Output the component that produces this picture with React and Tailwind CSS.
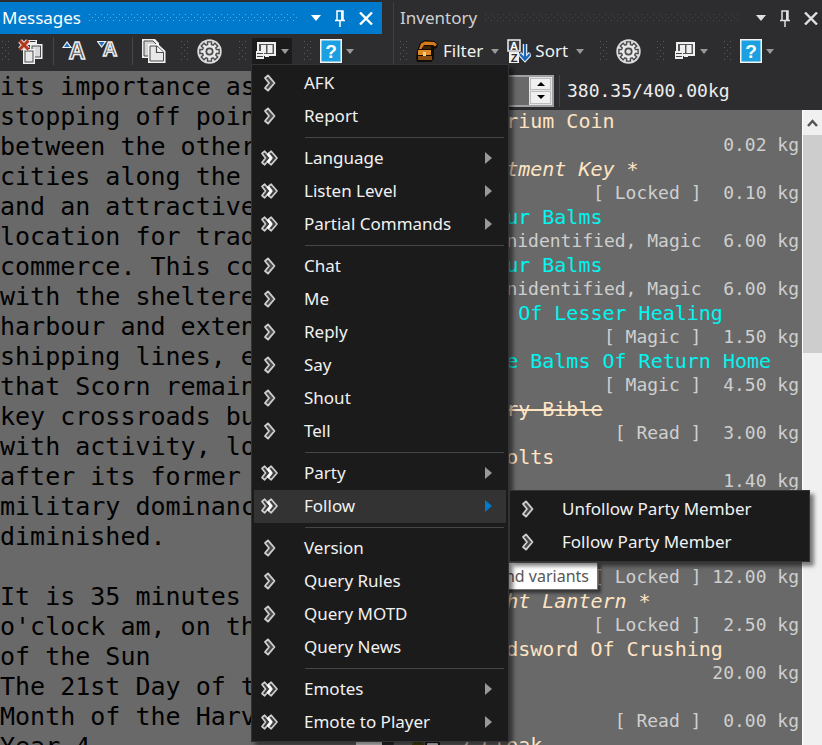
import React from "react";

const MONO = "font-['DejaVu_Sans_Mono','Liberation_Mono',monospace]";

/* ---------- textures ---------- */

function Dots({ id, color, className }) {
  return (
    <svg className={className} aria-hidden="true" shapeRendering="crispEdges">
      <defs>
        <pattern id={id} width="6" height="6" patternUnits="userSpaceOnUse">
          <rect x="0" y="0" width="1" height="1" fill={color} />
          <rect x="3" y="3" width="1" height="1" fill={color} />
        </pattern>
      </defs>
      <rect width="100%" height="100%" fill={`url(#${id})`} />
    </svg>
  );
}

function Grip({ id }) {
  return <Dots id={id} color="#5a5a5f" className="h-5 w-2 shrink-0" />;
}

/* ---------- icons ---------- */

function Caret({ className }) {
  return (
    <svg className={className} width="8" height="5" viewBox="0 0 8 5" aria-hidden="true">
      <path d="M0 0h8L4 5z" fill="#999" />
    </svg>
  );
}

function ClearIcon() {
  return (
    <svg width="25" height="25" viewBox="0 0 25 25" aria-hidden="true">
      <path d="M10 1h9v5h-9z" fill="#ededed" />
      <path d="M12 2.500h5.500" stroke="#3a3a3d" strokeWidth="1" />
      <rect x="12" y="5" width="12.500" height="15" fill="#f2f2f2" />
      <rect x="14" y="7" width="8.500" height="11" fill="#d8d8d8" stroke="#4a4a4d" strokeWidth="1" />
      <rect x="5" y="10" width="12" height="15" fill="#f2f2f2" />
      <rect x="7" y="12" width="8" height="11" fill="#e8e8e8" stroke="#4a4a4d" strokeWidth="1" />
      <path d="M2 2l8 8M10 2l-8 8" stroke="#e8e8e8" strokeWidth="5" />
      <path d="M1.500 1.500l9 9M10.500 1.500l-9 9" stroke="#b3351c" strokeWidth="3" />
    </svg>
  );
}

function FontIcon({ up }) {
  return (
    <svg width="25" height="24" viewBox="0 0 25 24" aria-hidden="true">
      <text
        x={up ? 15 : 13}
        y={up ? 20 : 17}
        textAnchor="middle"
        fontFamily="Liberation Sans, sans-serif"
        fontSize={up ? 23 : 20}
        fontWeight="bold"
        fill="#4a4a4d"
        stroke="#ececec"
        strokeWidth="1.500"
      >
        A
      </text>
      {up ? (
        <path d="M1 8.500L5 3l4 5.500z" fill="#1f6fc0" stroke="#f0f0f0" strokeWidth="1.200" />
      ) : (
        <path d="M0.600 2.500h8L4.600 8z" fill="#1f6fc0" stroke="#f0f0f0" strokeWidth="1.200" />
      )}
    </svg>
  );
}

function CopyIcon() {
  return (
    <svg width="24" height="24" viewBox="0 0 24 24" aria-hidden="true">
      <path d="M0 0h13l4 4v15H0z" fill="#f0f0f0" />
      <path d="M2 2h9l4 4v11H2z" fill="#d4d4d4" stroke="#4a4a4d" strokeWidth="1" />
      <path d="M6 5h10l7.500 7v12H6z" fill="#f4f4f4" />
      <path d="M8 7h7l6.500 6v9H8z" fill="#e8e8e8" stroke="#4a4a4d" strokeWidth="1" />
      <path d="M14.500 7v6.500h7" fill="#f4f4f4" stroke="#4a4a4d" strokeWidth="1.200" />
    </svg>
  );
}

function GearIcon() {
  const pts = [];
  for (let i = 0; i < 8; i++) {
    const base = (i * Math.PI) / 4;
    [[-0.27, 7.2], [-0.2, 9.8], [0.2, 9.8], [0.27, 7.2]].forEach(([a, r]) => {
      pts.push(`${(12.5 + r * Math.sin(base + a)).toFixed(2)},${(12.5 - r * Math.cos(base + a)).toFixed(2)}`);
    });
  }
  return (
    <svg width="25" height="25" viewBox="0 0 25 25" aria-hidden="true">
      <circle cx="12.500" cy="12.500" r="12.200" fill="#dcdcdc" />
      <polygon points={pts.join(" ")} fill="#e8e8e8" stroke="#4a4a4d" strokeWidth="1.400" />
      <circle cx="12.500" cy="12.500" r="3.200" fill="#e0e0e0" stroke="#4a4a4d" strokeWidth="1.700" />
    </svg>
  );
}

function MacroIcon() {
  return (
    <svg width="20" height="18" viewBox="0 0 20 18" aria-hidden="true">
      <rect x="1" y="0" width="19" height="14" fill="#efefef" />
      <path d="M3 2h15v10H3z" fill="#555" />
      <rect x="5" y="3" width="5" height="8" fill="#efefef" />
      <rect x="11.500" y="3" width="5" height="8" fill="#efefef" />
      <rect x="0" y="9" width="8" height="8" fill="#efefef" />
      <path d="M1 11.500h6M1 14.500h6" stroke="#444" strokeWidth="1.200" />
      <path d="M9 14h4" stroke="#efefef" strokeWidth="2" />
    </svg>
  );
}

function HelpIcon() {
  return (
    <svg width="22" height="24" viewBox="0 0 22 24" aria-hidden="true">
      <rect x="0" y="0" width="22" height="24" fill="#f2f2f2" />
      <rect x="1.500" y="1.500" width="19" height="21" fill="#1ba1e2" />
      <text
        x="11"
        y="19"
        textAnchor="middle"
        fontFamily="Liberation Sans, sans-serif"
        fontSize="19"
        fontWeight="bold"
        fill="#fff"
      >
        ?
      </text>
    </svg>
  );
}

function BagIcon() {
  return (
    <svg width="24" height="24" viewBox="0 0 24 24" aria-hidden="true">
      <path d="M2 12L5 4l5-3 9 1 4 3-1 4-3 1v10l-3 3H2l-1-4z" fill="#120c06" />
      <path d="M4 10l2-5.500L10 2.500l9 .5 3 2.200-2 2.300-2-1.500H9L6.500 10z" fill="#d67a1c" />
      <path d="M3 11h13v5H3z" fill="#e08a28" />
      <path d="M3 17h14v4H3z" fill="#8a4d12" />
      <path d="M8 13h3v4H8z" fill="#fbd27a" />
      <path d="M8 7h8v3H8z" fill="#3a2108" />
    </svg>
  );
}

function SortIcon() {
  const letter = {
    fontFamily: "Liberation Sans, sans-serif",
    fontWeight: "bold",
    fontSize: "11",
    textAnchor: "middle",
  };
  return (
    <svg width="24" height="24" viewBox="0 0 24 24" aria-hidden="true">
      <rect x="1" y="1" width="12" height="11" fill="#3a3a3d" stroke="#f0f0f0" strokeWidth="1.500" />
      <text x="7" y="10.500" fill="#fff" {...letter}>A</text>
      <rect x="2" y="13" width="10" height="11" fill="#f0f0f0" />
      <text x="7" y="22.500" fill="#2d2d30" {...letter}>Z</text>
      <path d="M18 5v15M12.500 14.500l5.500 6 5.500-6" fill="none" stroke="#e8f1fa" strokeWidth="4.500" />
      <path d="M18 5v15M13 15l5 5.500 5-5.500" fill="none" stroke="#1766b5" strokeWidth="2.200" />
    </svg>
  );
}

function ChevronIcon({ double }) {
  return (
    <svg width="19" height="18" viewBox="0 0 19 18" aria-hidden="true" strokeLinejoin="round">
      {double ? (
        <>
          <path
            d="M2 4.500l2.700-2.300L10.500 9l-5.800 6.800L2 13.500 5.500 9z"
            fill="#3f3f41"
            stroke="#cfcfcf"
            strokeWidth="1.700"
          />
          <path
            d="M8.500 4.500l2.700-2.300L17 9l-5.800 6.800-2.700-2.300L12 9z"
            fill="#3f3f41"
            stroke="#cfcfcf"
            strokeWidth="1.700"
          />
          <path d="M7.500 4.500L11 9l-3.500 4.500" fill="none" stroke="#fff" strokeWidth="2.200" />
        </>
      ) : (
        <path
          d="M5 4l3-2.600L14.500 9 8 16.600 5 14l4-5z"
          fill="#4a4a4c"
          stroke="#cfcfcf"
          strokeWidth="1.800"
        />
      )}
    </svg>
  );
}

/* ---------- chrome ---------- */

function TitleBar({ id, title, active }) {
  const glyph = active ? "#fff" : "#e0e0e0";
  return (
    <header
      className={
        active
          ? "flex h-8 shrink-0 items-center bg-[#007acc] pl-[2px] pr-[9px] text-white"
          : "flex h-8 shrink-0 items-center bg-[#2d2d30] pl-[6px] pr-1 text-[#d0d0d0]"
      }
    >
      <h2 className="mr-2">{title}</h2>
      <Dots id={id} color={active ? "#63aee0" : "#47474b"} className="h-2 min-w-0 flex-1" />
      <div className={active ? "ml-3 flex items-center gap-[14px]" : "ml-4 flex items-center gap-[14px]"}>
        <button type="button" aria-label="Window options">
          <svg width="10" height="6" viewBox="0 0 10 6"><path d="M0 0h10L5 6z" fill={glyph} /></svg>
        </button>
        <button type="button" aria-label="Auto hide">
          <svg width="10" height="17" viewBox="0 0 10 17">
            <path d="M2 10V1h6v9M0 10.500h10M5 11v6" fill="none" stroke={glyph} strokeWidth="1.500" />
            <path d="M7 1v9" stroke={glyph} strokeWidth="2" />
          </svg>
        </button>
        <button type="button" aria-label="Close">
          <svg width="14" height="13" viewBox="0 0 14 13">
            <path d="M1 0.500l12 12M13 0.500l-12 12" stroke={glyph} strokeWidth="2.400" />
          </svg>
        </button>
      </div>
    </header>
  );
}

function HelpButton() {
  return (
    <button type="button" aria-label="Help" className="flex items-center gap-1">
      <HelpIcon />
      <Caret />
    </button>
  );
}

/* ---------- menu ---------- */

const SUB = [{ label: "Unfollow Party Member" }, { label: "Follow Party Member" }];

const MENU = [
  [{ label: "AFK" }, { label: "Report" }],
  [
    { label: "Language", more: true },
    { label: "Listen Level", more: true },
    { label: "Partial Commands", more: true },
  ],
  [
    { label: "Chat" },
    { label: "Me" },
    { label: "Reply" },
    { label: "Say" },
    { label: "Shout" },
    { label: "Tell" },
  ],
  [{ label: "Party", more: true }, { label: "Follow", more: true, open: SUB }],
  [{ label: "Version" }, { label: "Query Rules" }, { label: "Query MOTD" }, { label: "Query News" }],
  [{ label: "Emotes", more: true }, { label: "Emote to Player", more: true }],
];

function MenuItem({ item }) {
  return (
    <li className="relative">
      <button
        type="button"
        className={
          item.open
            ? "flex h-[33px] w-full items-center bg-[#333334] pb-px pl-[6px] pr-[14px] text-left"
            : "flex h-[33px] w-full items-center pb-px pl-[6px] pr-[14px] text-left"
        }
      >
        <ChevronIcon double={item.more} />
        <span className="ml-[25px] flex-1 whitespace-nowrap">{item.label}</span>
        {item.more && (
          <svg width="7" height="12" viewBox="0 0 7 12" aria-hidden="true">
            <path d="M0 0l7 6-7 6z" fill={item.open ? "#007acc" : "#999"} />
          </svg>
        )}
      </button>
      {item.open && (
        <ul className="absolute left-full top-0 ml-[3px] w-[301px] border border-[#333337] bg-[#1b1b1c] p-[2px] shadow-[4px_4px_4px_rgba(0,0,0,0.5)]">
          {item.open.map((s) => (
            <MenuItem key={s.label} item={s} />
          ))}
        </ul>
      )}
    </li>
  );
}

function CommandMenu() {
  return (
    <div className="absolute -left-px top-full z-20 w-[258px] border border-[#333337] bg-[#1b1b1c] p-[2px] text-[#f1f1f1] shadow-[4px_4px_4px_rgba(0,0,0,0.5)]">
      {MENU.map((group, i) => (
        <React.Fragment key={i}>
          {i > 0 && <hr className="my-1 ml-[51px] mr-[2px] border-0 border-t border-[#46464a]" />}
          <ul>
            {group.map((item) => (
              <MenuItem key={item.label} item={item} />
            ))}
          </ul>
        </React.Fragment>
      ))}
    </div>
  );
}

/* ---------- messages panel ---------- */

const LINES = [
  "its importance as a",
  "stopping off point",
  "between the other",
  "cities along the coast",
  "and an attractive",
  "location for trade and",
  "commerce. This combined",
  "with the sheltered",
  "harbour and extensive",
  "shipping lines, ensure",
  "that Scorn remains a",
  "key crossroads bustling",
  "with activity, long",
  "after its former",
  "military dominance has",
  "diminished.",
  " ",
  "It is 35 minutes past 7",
  "o'clock am, on the Day",
  "of the Sun",
  "The 21st Day of the",
  "Month of the Harvest,",
  "Year 4",
];

function Messages() {
  return (
    <section className="flex min-w-0 flex-[382] flex-col">
      <TitleBar id="dots-messages" title="Messages" active />
      <div className="flex h-[37px] shrink-0 items-center pb-[3px] pl-[2px]">
        <Grip id="grip-a" />
        <button type="button" aria-label="Clear" className="ml-2"><ClearIcon /></button>
        <span className="ml-[10px] h-7 w-px shrink-0 bg-[#46464a]" />
        <button type="button" aria-label="Increase font size" className="ml-2"><FontIcon up /></button>
        <button type="button" aria-label="Decrease font size" className="ml-[10px]"><FontIcon /></button>
        <span className="ml-[10px] h-7 w-px shrink-0 bg-[#46464a]" />
        <button type="button" aria-label="Copy" className="ml-[9px] mr-[15px]"><CopyIcon /></button>
        <Grip id="grip-b" />
        <button type="button" aria-label="Settings" className="ml-2 mr-[17px]"><GearIcon /></button>
        <Grip id="grip-c" />
        <div className="relative ml-[5px] mr-3">
          <button
            type="button"
            aria-label="Commands"
            aria-expanded="true"
            className="flex h-[26px] w-[40px] items-center gap-[5px] bg-[#1b1b1c] pl-1"
          >
            <MacroIcon />
            <Caret />
          </button>
          <CommandMenu />
        </div>
        <Grip id="grip-d" />
        <div className="ml-2"><HelpButton /></div>
      </div>
      <div className="flex min-h-0 flex-1 bg-[#696969]">
        <div className={`${MONO} min-w-0 flex-1 overflow-hidden whitespace-pre pt-px text-[25px] leading-[30px] text-black`}>
          {LINES.map((l, i) => (
            <p key={i}>{l}</p>
          ))}
        </div>
        <div className="w-[26px] bg-[#f0f0f0]" />
      </div>
    </section>
  );
}

/* ---------- inventory panel ---------- */

const MAGIC = "text-[#00f5f0]";
const PLAIN = "text-[#ffe4c4]";

const ITEMS = [
  { name: "Imperium Coin", detail: "0.02 kg", style: PLAIN },
  { name: "Apartment Key *", detail: "[ Locked ]  0.10 kg", style: `${PLAIN} italic` },
  { name: "Armour Balms", detail: "Unidentified, Magic  6.00 kg", style: MAGIC },
  { name: "Armour Balms", detail: "Unidentified, Magic  6.00 kg", style: MAGIC },
  { name: "Balm Of Lesser Healing", detail: "[ Magic ]  1.50 kg", style: MAGIC },
  { name: "Three Balms Of Return Home", detail: "[ Magic ]  4.50 kg", style: MAGIC },
  { name: "Dreary Bible", detail: "[ Read ]  3.00 kg", style: `${PLAIN} line-through` },
  { name: "14 Bolts", detail: "1.40 kg", style: PLAIN },
  { name: "Rod", detail: "3.00 kg", style: PLAIN },
  { name: "Key", detail: "[ Locked ] 12.00 kg", style: PLAIN },
  { name: "Bright Lantern *", detail: "[ Locked ]  2.50 kg", style: `${PLAIN} italic` },
  { name: "Broadsword Of Crushing", detail: "20.00 kg", style: PLAIN },
  { name: "Map", detail: "[ Read ]  0.00 kg", style: PLAIN },
  { name: "2 Cloak", detail: "2.00 kg", style: PLAIN },
];

function Inventory() {
  return (
    <section className="flex min-w-0 flex-[428] flex-col border-l border-[#3f3f46]">
      <TitleBar id="dots-inventory" title="Inventory" />
      <div className="flex h-[37px] shrink-0 items-center pb-[3px] pl-[6px] text-[#f1f1f1]">
        <Grip id="grip-e" />
        <button type="button" className="ml-[7px] flex items-center">
          <BagIcon />
          <span className="ml-1">Filter</span>
          <Caret className="ml-2" />
        </button>
        <button type="button" className="ml-2 mr-4 flex items-center">
          <SortIcon />
          <span className="ml-1">Sort</span>
          <Caret className="ml-2" />
        </button>
        <Grip id="grip-f" />
        <button type="button" aria-label="Settings" className="ml-2 mr-4"><GearIcon /></button>
        <Grip id="grip-g" />
        <button type="button" aria-label="Commands" className="ml-[10px] mr-4 flex items-center gap-[5px]">
          <MacroIcon />
          <Caret />
        </button>
        <Grip id="grip-h" />
        <div className="ml-2"><HelpButton /></div>
      </div>
      <div className={`${MONO} flex h-[39px] shrink-0 items-center text-[#ededed]`}>
        <div className="flex h-8 w-[160px] border-2 border-[#a0a0a4] bg-[#696969]">
          <input aria-label="Amount" className="min-w-0 flex-1 bg-transparent outline-none" />
          <div className="flex w-[23px] flex-col gap-px bg-[#e4e4e4] p-px">
            <button type="button" aria-label="Increase" className="flex flex-1 items-center justify-center border border-[#bdbdbd] bg-[#f0f0f0]">
              <svg width="8" height="4" viewBox="0 0 8 4"><path d="M0 4h8L4 0z" fill="#000" /></svg>
            </button>
            <button type="button" aria-label="Decrease" className="flex flex-1 items-center justify-center border border-[#bdbdbd] bg-[#f0f0f0]">
              <svg width="8" height="4" viewBox="0 0 8 4"><path d="M0 0h8L4 4z" fill="#000" /></svg>
            </button>
          </div>
        </div>
        <span className="ml-[5px] h-8 w-px bg-[#46464a]" />
        <span className="ml-[7px] text-[18px]">380.35/400.00kg</span>
      </div>
      <div className="relative flex min-h-0 flex-1 bg-[#696969]">
        <ul className={`${MONO} min-w-0 flex-1 overflow-hidden whitespace-pre pl-4 pr-[3px]`}>
          {ITEMS.map((it, i) => (
            <li key={i} className="flex gap-2">
              <svg width="40" height="24" viewBox="0 0 40 24" className="shrink-0" aria-hidden="true">
                <rect x="2" y="8" width="12" height="14" rx="3" fill="#4a4410" />
                <rect x="16" y="8" width="13" height="14" rx="2" fill="#e8e8e8" stroke="#1a1a1a" strokeWidth="2" />
              </svg>
              <div className="min-w-0 flex-1">
                <p className="text-[20px] leading-[22px]"><span className={it.style}>{it.name}</span></p>
                <p className="flex justify-end text-[18px] leading-[26px] text-[#cfcfcf]">{it.detail}</p>
              </div>
            </li>
          ))}
        </ul>
        <div className="flex w-5 shrink-0 flex-col border-l border-white bg-[#f0f0f0]">
          <button type="button" aria-label="Scroll up" className="flex h-[25px] items-center justify-center">
            <svg width="11" height="8" viewBox="0 0 11 8"><path d="M1 7l4.500-5L10 7" fill="none" stroke="#555" strokeWidth="2.500" /></svg>
          </button>
          <div className="h-[218px] bg-[#cdcdcd]" />
        </div>
        <div
          role="tooltip"
          className="absolute left-[90px] top-[452px] flex h-[28px] w-[114px] items-center justify-end border border-[#767676] bg-white pr-2 text-[16px] text-[#575757] shadow-[3px_3px_3px_rgba(0,0,0,0.5)]"
        >
          and variants
        </div>
      </div>
    </section>
  );
}

export default function App() {
  return (
    <main className="flex h-screen gap-[11px] overflow-hidden bg-[#2d2d30] pt-[2px] font-['Noto_Sans','Open_Sans',sans-serif] text-[17px]">
      <Messages />
      <Inventory />
    </main>
  );
}
